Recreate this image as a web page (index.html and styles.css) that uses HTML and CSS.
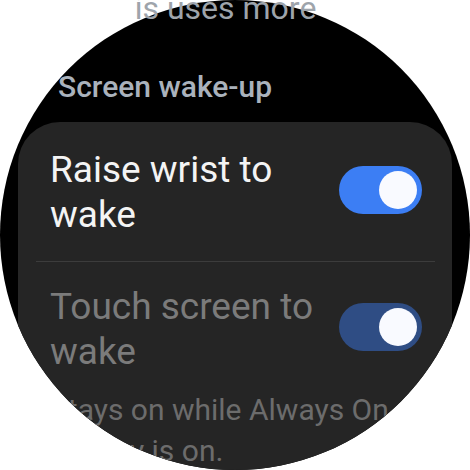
FILE: index.html
```html
<!DOCTYPE html>
<html lang="en">
<head>
    <meta charset="UTF-8">
    <meta name="viewport" content="width=device-width, initial-scale=1.0">
    <title>Screen wake-up</title>
    <link rel="stylesheet" href="styles.css">
</head>
<body>

    <div class="watch">
        <!-- tail of the item above, scrolled off the top -->
        <p class="peek">This uses more battery.</p>

        <div class="dial">
            <h2 class="section">Screen wake-up</h2>

            <div class="card">
                <div class="row">
                    <span class="label">Raise wrist to wake</span>
                    <span class="switch"><span class="knob"></span></span>
                </div>
                <div class="divider"></div>
                <div class="row dim">
                    <span class="label">Touch screen to wake</span>
                    <span class="switch"><span class="knob"></span></span>
                </div>
                <p class="note">Stays on while Always On display is on.</p>
            </div>
        </div>
    </div>

</body>
</html>
```

FILE: styles.css
```css
body {
    margin: 0;
    background: #ffffff;
    font-family: Roboto, "Noto Sans", sans-serif;
}
.watch {
    position: relative;
    width: 470px;
    height: 470px;
}
.dial {
    width: 470px;
    height: 470px;
    border-radius: 50%;
    overflow: hidden;
    background: #000000;
    padding-top: 69px;
    box-sizing: border-box;
}
.peek {
    position: absolute;
    top: -8px;
    left: 135px;
    width: 187px;
    margin: 0;
    overflow: hidden;
    white-space: nowrap;
    text-indent: -37px;
    font-size: 32px;
    line-height: 32px;
    color: #9ea4ab;
    z-index: 2;
}
.section {
    margin: 0 0 17px 58px;
    font-size: 30px;
    line-height: 36px;
    font-weight: 500;
    color: #aab2bc;
}
.card {
    margin: 0 18px;
    background: #252525;
    border-radius: 42px;
    padding-bottom: 40px;
}
.row {
    display: flex;
    align-items: center;
    gap: 8px;
    padding: 25px 30px 24px 32px;
}
.row.dim {
    padding-top: 22px;
    padding-bottom: 0;
}
.label {
    flex: 1;
    font-size: 37px;
    line-height: 45px;
    color: #f4f4f4;
}
.dim .label {
    color: #7b7b7b;
}
.switch {
    width: 83px;
    height: 48px;
    border-radius: 24px;
    background: #3c7ef4;
    display: flex;
    align-items: center;
    justify-content: flex-end;
    padding-right: 5px;
    box-sizing: border-box;
    margin-top: -4px;
}
.dim .switch {
    background: #2f4d84;
}
.knob {
    width: 38px;
    height: 38px;
    border-radius: 50%;
    background: #f9faff;
}
.divider {
    height: 1px;
    margin: 0 17px 0 18px;
    background: #3c3c3c;
}
.note {
    margin: 15px 30px 0 32px;
    font-size: 30px;
    line-height: 41px;
    color: #6c6c6c;
}
```
